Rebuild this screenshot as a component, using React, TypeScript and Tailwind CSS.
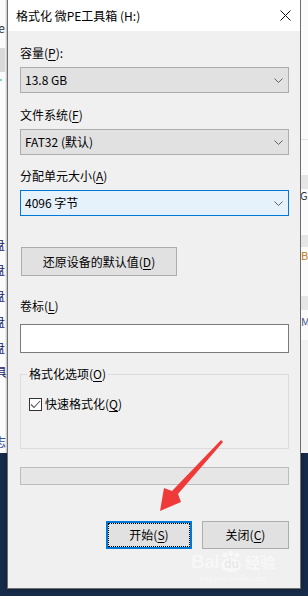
import type { ReactNode } from 'react'

const font = { fontFamily: '"Noto Sans CJK SC", "Noto Sans", sans-serif' }

function Key({ children }: { children: ReactNode }) {
  return <span className="underline underline-offset-2 decoration-1">{children}</span>
}

function Chevron() {
  return (
    <svg width="9" height="5" viewBox="0 0 9 5" className="shrink-0">
      <path d="M0.5 0.5 L4.5 4.5 L8.5 0.5" fill="none" stroke="#606060" strokeWidth="1" />
    </svg>
  )
}

function Combo({ value, focused }: { value: string; focused?: boolean }) {
  return (
    <div
      className={
        focused
          ? 'mt-[6px] h-[26px] flex items-center justify-between pl-[4px] pr-[5px] border border-[#0078d7] bg-[#e5f1fb]'
          : 'mt-[6px] h-[26px] flex items-center justify-between pl-[4px] pr-[5px] border border-[#adadad] bg-[#e1e1e1]'
      }
    >
      <span className="text-[12px] leading-[16px] text-black">{value}</span>
      <Chevron />
    </div>
  )
}

function LeftStrip() {
  const rows = [245, 270, 296, 322, 348]
  return (
    <div className="w-[7px] h-[453px] bg-[#fbfbfb] relative overflow-hidden shrink-0">
      <div className="absolute left-0 top-[48px] w-[5px] h-[24px] bg-[#d9d9d9]" />
      <div className="absolute right-[2px] top-[20px] text-[12px] leading-[16px] text-[#333] whitespace-nowrap">e</div>
      <div className="absolute left-0 top-[79px] w-[2px] h-[2px] bg-[#7fd3e6]" />
      {rows.map((y) => (
        <div key={y} className="absolute right-[2px] text-[12px] leading-[16px] text-[#1a1a6a] whitespace-nowrap" style={{ top: y - 8 }}>
          盘
        </div>
      ))}
      <div className="absolute right-[0px] top-[364px] text-[12px] leading-[16px] text-[#1a1a6a] whitespace-nowrap">具</div>
      <div className="absolute right-[1px] top-[434px] text-[12px] leading-[16px] text-[#3a4a9a] whitespace-nowrap">志</div>
      <div className="absolute right-0 top-0 w-[2px] h-full bg-gradient-to-r from-transparent to-[#bdbdbd]" />
    </div>
  )
}

function RightStrip() {
  return (
    <div className="w-[7px] h-[453px] bg-[#fbfbfb] relative overflow-hidden shrink-0">
      <div className="absolute left-0 top-[139px] w-full h-px bg-[#e3e3e3]" />
      <div className="absolute left-0 top-[175px] w-full h-[14px] bg-[#e6e6e6]" />
      <div className="absolute left-[-1px] top-[188px] text-[11px] leading-[14px] text-[#333] whitespace-nowrap">GB</div>
      <div className="absolute left-0 top-[235px] w-full h-[12px] bg-[#e6e6e6]" />
      <div className="absolute left-0 top-[248px] text-[11px] leading-[14px] text-[#c07820] whitespace-nowrap">B</div>
      <div className="absolute left-0 top-[296px] w-full h-[14px] bg-[#e6e6e6]" />
      <div className="absolute left-0 top-[314px] text-[11px] leading-[14px] text-[#3a5a9a] whitespace-nowrap">M</div>
      <div className="absolute left-0 top-[340px] w-full h-[113px] bg-[#f2f2f2]" />
    </div>
  )
}

function Arrow() {
  return (
    <svg className="absolute left-0 top-0 pointer-events-none" width="308" height="596" viewBox="0 0 308 596">
      <polygon
        points="221,440 223,442 178,494 181,502 160,511 164,488 172,491"
        fill="#f03a3a"
      />
    </svg>
  )
}

function Watermark() {
  return (
    <div className="absolute left-[191px] top-[551px] flex flex-col items-center pointer-events-none text-white/50" style={font}>
      <div className="flex items-center h-[22px]">
        <span className="text-[19px] leading-[20px] font-bold tracking-tight" style={{ fontFamily: 'Arial, "Liberation Sans", sans-serif' }}>
          Bai
        </span>
        <div className="relative w-[24px] h-[22px]">
          <svg width="24" height="22" viewBox="0 0 24 22" className="absolute inset-0">
            <circle cx="6" cy="4" r="2.5" fill="rgba(255,255,255,0.5)" />
            <circle cx="12" cy="2.5" r="2.5" fill="rgba(255,255,255,0.5)" />
            <circle cx="18" cy="4" r="2.5" fill="rgba(255,255,255,0.5)" />
            <ellipse cx="12" cy="14" rx="10" ry="7" fill="rgba(255,255,255,0.5)" />
          </svg>
          <span className="absolute left-[5px] top-[6px] text-[12px] leading-[14px] font-bold text-[#e8e8e8]" style={{ fontFamily: 'Arial, "Liberation Sans", sans-serif' }}>
            du
          </span>
        </div>
        <span className="ml-[2px] text-[15px] leading-[18px] font-bold">经验</span>
      </div>
      <span className="text-[9px] leading-[10px]" style={{ fontFamily: '"Liberation Serif", serif' }}>
        jingyan.baidu.com
      </span>
    </div>
  )
}

export default function App() {
  return (
    <div className="relative w-[308px] h-[596px] overflow-hidden bg-[#172b4a]" style={font}>
      <div className="flex items-start">
        <LeftStrip />
        <div className="w-[294px] h-[589px] shrink-0 flex flex-col border-x border-b border-[#6e6e6e] bg-[#f0f0f0] shadow-[0_0_6px_rgba(0,0,0,0.35)]">
          <div className="h-[31px] shrink-0 bg-white flex items-center justify-between pl-[8px] pr-[9px]">
            <span className="text-[12px] leading-[16px] text-black">格式化 微PE工具箱 (H:)</span>
            <svg width="11" height="11" viewBox="0 0 11 11">
              <path d="M0.5 0.5 L10.5 10.5 M10.5 0.5 L0.5 10.5" stroke="#111" strokeWidth="1" />
            </svg>
          </div>

          <div className="flex-1 flex flex-col pl-[12px] pr-[11px] text-[12px] leading-[16px] text-black">
            <div className="mt-[14px] h-[16px]">
              容量(<Key>P</Key>):
            </div>
            <Combo value="13.8 GB" />

            <div className="mt-[14px] h-[16px]">
              文件系统(<Key>F</Key>)
            </div>
            <Combo value="FAT32 (默认)" />

            <div className="mt-[13px] h-[16px]">
              分配单元大小(<Key>A</Key>)
            </div>
            <Combo value="4096 字节" focused />

            <button className="mt-[31px] ml-[1px] w-[156px] h-[29px] border border-[#adadad] bg-[#e1e1e1] flex items-center justify-center text-[12px] leading-[16px] text-black">
              还原设备的默认值(<Key>D</Key>)
            </button>

            <div className="mt-[22px] h-[16px]">
              卷标(<Key>L</Key>)
            </div>
            <div className="mt-[10px] h-[29px] border border-[#7a7a7a] bg-white" />

            <fieldset className="mt-[13px] h-[83px] border border-[#dcdcdc]">
              <legend className="ml-[6px] px-[2px] text-[12px] leading-[16px]">
                格式化选项(<Key>O</Key>)
              </legend>
              <div className="mt-[14px] ml-[8px] flex items-center gap-[3px]">
                <div className="w-[13px] h-[13px] border border-[#333] bg-white flex items-center justify-center">
                  <svg width="11" height="9" viewBox="0 0 11 9">
                    <path d="M1 4.5 L4 7.5 L10 1" fill="none" stroke="#555" strokeWidth="1.1" />
                  </svg>
                </div>
                <span>
                  快速格式化(<Key>Q</Key>)
                </span>
              </div>
            </fieldset>

            <div className="mt-[18px] h-[18px] border border-[#bcbcbc] bg-[#e6e6e6]" />

            <div className="mt-[36px] flex justify-end gap-[10px]">
              <button className="w-[86px] h-[28px] border-2 border-[#0078d7] bg-[#e1e1e1] outline-1 outline-dotted outline-black outline-offset-[-3px] flex items-center justify-center text-[12px] leading-[16px] text-black">
                开始(<Key>S</Key>)
              </button>
              <button className="w-[87px] h-[28px] border border-[#adadad] bg-[#e1e1e1] flex items-center justify-center text-[12px] leading-[16px] text-black">
                关闭(<Key>C</Key>)
              </button>
            </div>
          </div>
        </div>
        <RightStrip />
      </div>
      <Arrow />
      <Watermark />
    </div>
  )
}
